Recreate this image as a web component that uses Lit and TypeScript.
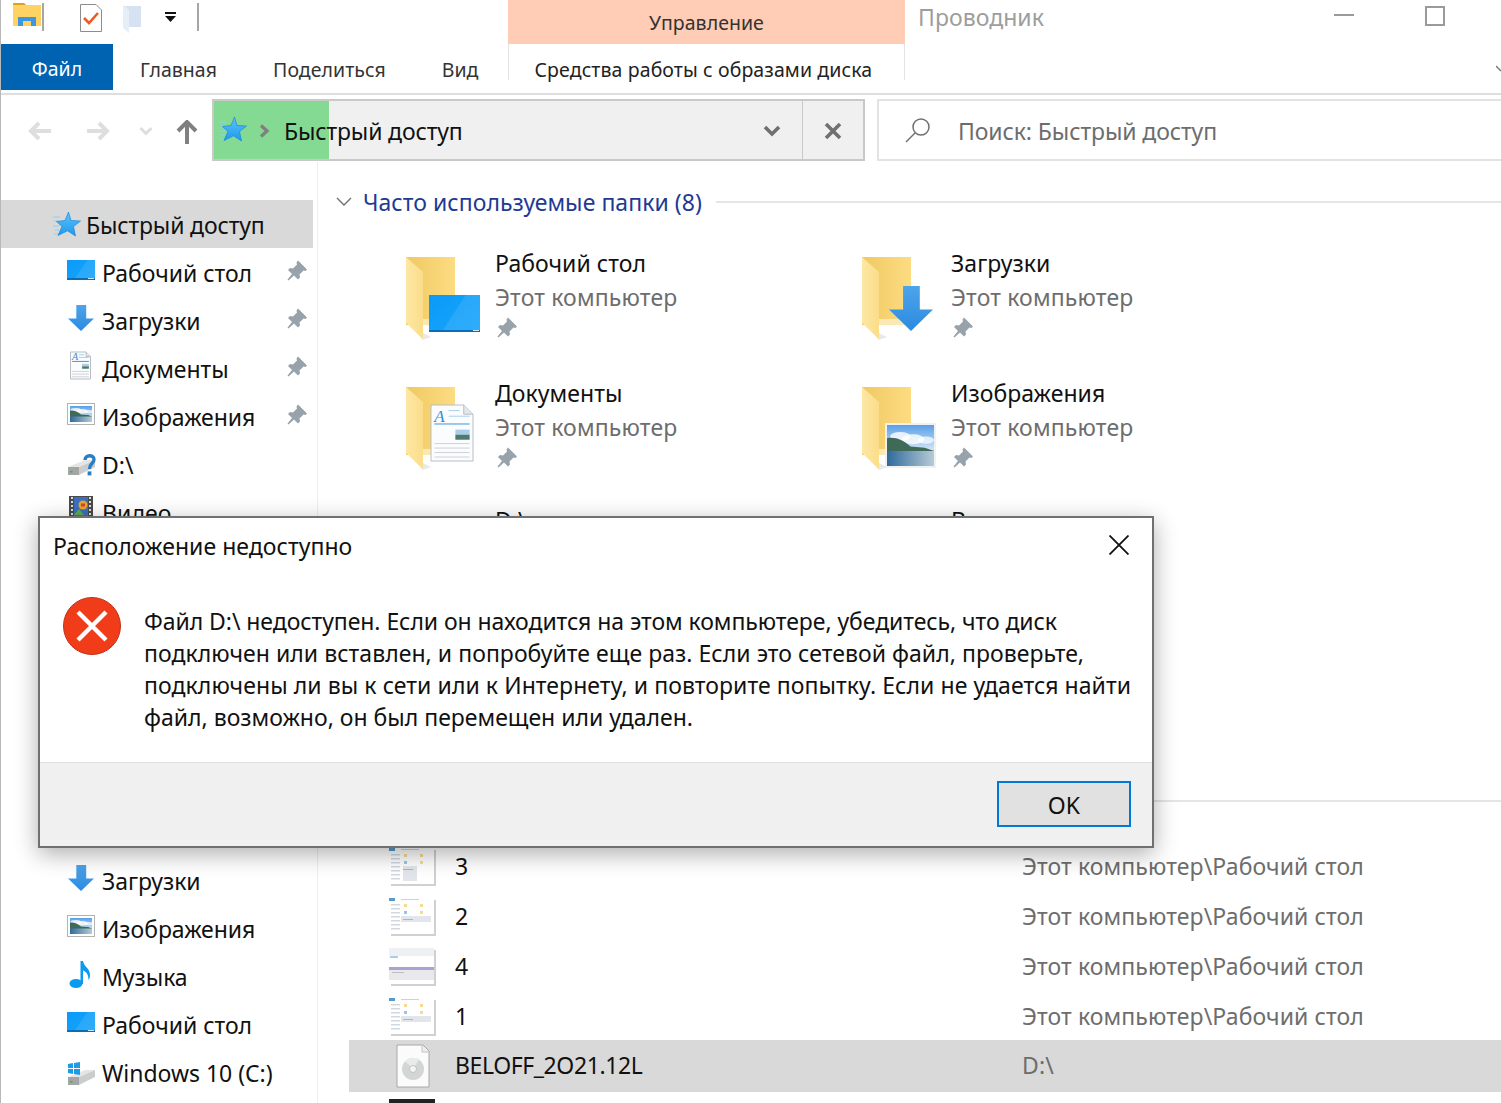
/**
 * Explorer window with the "location not available" dialog on top
 */

import { LitElement, html, svg, css } from 'lit'
import { customElement } from 'lit/decorators.js'

const PIN = 'M11 0 L20 9 L18.5 10.5 L16.5 10 L12.5 14 L13 17 L11 19 L7 15 L1.5 20 L0.5 19 L5 13.5 L1 9.5 L3 7.5 L6 8 L10 4 L9.5 2 Z'

const pin = () => html`<svg class="pin" width="20" height="21" viewBox="0 0 20 20"><path d=${PIN} fill="#98a2aa" /></svg>`

const star = () => html`<svg width="28" height="28" viewBox="0 0 28 28">
  <path d="M0 6h7M1 10h4M0 15h6M2 19h4M1 23h4" stroke="#8fd0f7" stroke-width="1.1" />
  <path d="M15.5 1 L18 9.5 L27.5 10 L20.5 15.5 L22.5 25 L14.5 19.8 L5 24.5 L9 15.5 L3.5 10.5 L12 9.5 Z" fill="url(#star)" stroke="#1a86d8" stroke-width=".7" />
</svg>`

const desktopBits = (x: number, y: number, w: number, h: number) => svg`
  <rect x=${x} y=${y} width=${w} height=${h} fill="url(#screen)" />
  <path d="M${x + w * 0.25} ${y + h} L${x + w * 0.72} ${y} H${x + w} V${y + h} Z" fill="#fff" opacity=".1" />
  <rect x=${x} y=${y + h - 2} width=${w} height="2" fill="#0a6db5" />
  <rect x=${x + w - 7} y=${y + h - 2} width="6" height="1" fill="#cfe9fb" />`

const arrowBits = (x: number, y: number, w: number, h: number) => {
  const sx = x + w * 0.32
  const sw = w * 0.38
  const mid = y + h * 0.52
  return svg`<path d="M${sx} ${y} H${sx + sw} V${mid} H${x + w} L${x + w / 2} ${y + h} L${x} ${mid} H${sx} Z" fill="url(#arrow)" />`
}

const pictureBits = (x: number, y: number, w: number, h: number, frame: string) => svg`
  <rect x=${x} y=${y} width=${w} height=${h} fill=${frame} />
  <rect x=${x + 2} y=${y + 2} width=${w - 4} height=${h * 0.58} fill="url(#sky)" />
  <ellipse cx=${x + w * 0.3} cy=${y + h * 0.3} rx=${w * 0.2} ry=${h * 0.1} fill="#fff" opacity=".8" />
  <ellipse cx=${x + w * 0.55} cy=${y + h * 0.36} rx=${w * 0.22} ry=${h * 0.11} fill="#fff" opacity=".8" />
  <ellipse cx=${x + w * 0.8} cy=${y + h * 0.38} rx=${w * 0.16} ry=${h * 0.08} fill="#fff" opacity=".7" />
  <rect x=${x + 2} y=${y + h * 0.6} width=${w - 4} height=${h * 0.4 - 2} fill="url(#water)" />
  <path d="M${x + 2} ${y + h * 0.34} C${x + w * 0.2} ${y + h * 0.3} ${x + w * 0.35} ${y + h * 0.38} ${x + w * 0.5} ${y + h * 0.52} L${x + w * 0.78} ${y + h * 0.55} L${x + w - 2} ${y + h * 0.62} H${x + 2} Z" fill="#3f6a58" />`

const docBits = (x: number, y: number, w: number, h: number, big: boolean) => {
  const fold = w * 0.22
  const lines = big ? [0.68, 0.76, 0.84, 0.92] : [0.7, 0.8, 0.9]
  return svg`
  <path d="M${x} ${y} H${x + w - fold} L${x + w} ${y + fold} V${y + h} H${x} Z" fill="#fbfcfd" stroke="#b8bec4" />
  <path d="M${x + w - fold} ${y} V${y + fold} H${x + w}" fill="#e4e7ea" stroke="#b8bec4" />
  <text x=${x + w * 0.08} y=${y + h * 0.3} class="doc-a" font-size=${big ? 17 : 10}>A</text>
  <path d="M${x + w * 0.42} ${y + h * 0.1} H${x + w * 0.68} M${x + w * 0.42} ${y + h * 0.2} H${x + w * 0.92}" stroke="#a9d0ec" />
  <rect x=${x + w * 0.08} y=${y + h * 0.33} width=${w * 0.84} height="1" fill="#3b9ae0" />
  <rect x=${x + w * 0.58} y=${y + h * 0.44} width=${w * 0.34} height=${h * 0.09} fill="#a9cdea" />
  <rect x=${x + w * 0.58} y=${y + h * 0.53} width=${w * 0.34} height=${h * 0.09} fill="#4d7a6c" />
  ${lines.map((l) => svg`<rect x=${x + w * 0.08} y=${y + h * l} width=${w * 0.84} height="1" fill="#cfd3d7" />`)}`
}

// Big yellow folder with a small badge in front of it
const folder = (badge: unknown) => html`<svg class="folder" width="80" height="84" viewBox="0 0 80 84">
  <rect x="1" y="0" width="49" height="68" fill="url(#folderBack)" />
  <rect x="18" y="62" width="32" height="6" fill="#fbe9b4" />
  <path d="M6 70 L18 83 L26 80 Z" fill="#e9e9e9" />
  <path d="M1 0 L18 15 V82 L1 66 Z" fill="url(#folderFront)" />
  ${badge}
</svg>`

const driveBody = () => svg`
  <path d="M2 18 L19 11 H29 L13 18 Z" fill="#e4e5e5" />
  <path d="M2 18 H13 V26 H2 Z" fill="#a4a6a6" />
  <path d="M13 18 L29 11 V18 L13 26 Z" fill="#cbcdcd" />
  <rect x="4" y="22" width="2.5" height="1.5" fill="#3bb54a" />`

const sideIcons: Record<string, () => unknown> = {
  desktop: () => html`<svg class="ic" width="30" height="30" viewBox="0 0 30 30">${desktopBits(1, 5, 28, 20)}</svg>`,
  download: () => html`<svg class="ic" width="30" height="30" viewBox="0 0 30 30">${arrowBits(2, 2, 26, 26)}</svg>`,
  doc: () => html`<svg class="ic" width="30" height="30" viewBox="0 0 30 30">${docBits(4.5, 1, 20, 27, false)}</svg>`,
  picture: () => html`<svg class="ic" width="30" height="30" viewBox="0 0 30 30">
    <rect x="1" y="4" width="28" height="22" fill="#b3b3b3" />${pictureBits(2, 5, 26, 20, '#fff')}</svg>`,
  missing: () => html`<svg class="ic" width="30" height="30" viewBox="0 -2 30 30">${driveBody()}
    <path d="M19 11 C19 5.5 28 5.5 28 10.5 C28 14.5 23.5 14 23.5 20" fill="none" stroke="#2a7fc4" stroke-width="3.4" />
    <rect x="21.6" y="22.4" width="3.8" height="4" fill="#2a7fc4" /></svg>`,
  film: () => html`<svg class="ic" width="30" height="30" viewBox="0 0 30 30">
    <rect x="3" y="1" width="24" height="28" fill="#4a4a4a" />
    <path d="M5 3h2M5 7h2M5 11h2M5 15h2M5 19h2M5 23h2M23 3h2M23 7h2M23 11h2M23 15h2M23 19h2M23 23h2" stroke="#ddd" stroke-width="2" />
    <rect x="8" y="2" width="14" height="26" fill="#3c6fc0" />
    <path d="M8 20 L13 14 L18 20 Z" fill="#5bb04c" />
    <circle cx="17" cy="10" r="4.5" fill="#e8a82c" />
    <path d="M15 10h4" stroke="#d9423a" stroke-width="3" /></svg>`,
  music: () => html`<svg class="ic" width="30" height="30" viewBox="0 0 30 30">
    <ellipse cx="10" cy="24.5" rx="6.5" ry="4.5" fill="#0a9bf0" />
    <path d="M14.5 2 H17 C18 8 24 9 24 16 C24 18.5 23.4 20 22.4 21 C22.7 15 20 13 17 11.5 V25 H14.5 Z" fill="#0a9bf0" /></svg>`,
  windows: () => html`<svg class="ic" width="30" height="30" viewBox="0 -4 30 30">${driveBody()}
    <path d="M2 5 L7 4 V9 H2 Z M8 4 L14 3 V9 H8 Z M2 10 H7 V15 L2 14 Z M8 10 H14 V16 L8 15 Z" fill="#1e9be8" /></svg>`,
}

// Tiny screenshot preview used by the recent files
const thumb = (kind: number) => html`<svg class="thumb" width="47" height="38" viewBox="0 0 47 38">
  <rect x="2" y="2" width="45" height="36" fill="#d0d0d0" />
  <rect x="0" y="0" width="45" height="36" fill="#fff" />
  <g opacity=".65">
  ${kind === 3
    ? svg`<rect x="0" y="0" width="45" height="8" fill="#e6eaee" />
        <rect x="1" y="8" width="8" height="2" fill="#7fb3e0" />
        <rect x="0" y="19" width="45" height="3" fill="#7a74b8" />
        <rect x="0" y="22" width="45" height="10" fill="#dcdce4" />
        <rect x="3" y="24" width="12" height="1" fill="#9a9a9a" />`
    : svg`<rect x="0" y="0" width="6" height="3" fill="#0063b1" />
        <rect x="12" y="1" width="18" height="1" fill="#f2a58c" />
        ${[6, 10, 14, 18, 22, 26, 30].map((y) => svg`<rect x="2" y=${y} width="9" height="1.5" fill="#b9c4d0" />`)}
        <rect x="15" y="6" width="3" height="3" fill="#f0c95c" />
        <rect x="31" y="6" width="3" height="3" fill="#f0c95c" />
        <rect x="15" y="13" width="3" height="3" fill="#5aa9e6" />
        <rect x="31" y="13" width="3" height="3" fill="#f0c95c" />
        <rect x=${kind === 0 ? 14 : 12} y="18" width=${kind === 0 ? 14 : 30} height=${kind === 0 ? 15 : 6} fill="#d4d9e0" />
        <rect x="14" y="21" width="10" height="1" fill="#8d8d8d" />`}
  </g>
</svg>`

const discFile = () => html`<svg class="thumb" width="47" height="44" viewBox="0 0 47 44">
  <path d="M8 1 H34 L40 7 V43 H8 Z" fill="#fbfbfb" stroke="#a8a8a8" />
  <path d="M33 1 V8 H40" fill="#ededed" stroke="#c4c4c4" />
  <circle cx="24" cy="25" r="11" fill="#d3d6d6" />
  <path d="M24 25 L16 17 A11 11 0 0 1 30 15.5 Z" fill="#e9ebeb" />
  <circle cx="24" cy="25" r="3.5" fill="#f4f4f4" stroke="#b5b8b8" stroke-width=".8" />
</svg>`

interface Tile {
  name: string
  badge: unknown
}

const TILES: Tile[] = [
  { name: 'Рабочий стол', badge: desktopBits(24, 38, 51, 37) },
  { name: 'Загрузки', badge: arrowBits(28, 29, 44, 45) },
  { name: 'Документы', badge: docBits(26, 18, 42, 56, true) },
  { name: 'Изображения', badge: pictureBits(24, 36, 51, 45, '#f1f1f1') },
  { name: 'D:\\', badge: null },
  { name: 'Видео', badge: null },
]

const SIDE_TOP = [
  { icon: 'desktop', label: 'Рабочий стол', pinned: true },
  { icon: 'download', label: 'Загрузки', pinned: true },
  { icon: 'doc', label: 'Документы', pinned: true },
  { icon: 'picture', label: 'Изображения', pinned: true },
  { icon: 'missing', label: 'D:\\', pinned: false },
  { icon: 'film', label: 'Видео', pinned: false },
]

const SIDE_BOTTOM = [
  { icon: 'doc', label: 'Документы', pinned: false },
  { icon: 'download', label: 'Загрузки', pinned: false },
  { icon: 'picture', label: 'Изображения', pinned: false },
  { icon: 'music', label: 'Музыка', pinned: false },
  { icon: 'desktop', label: 'Рабочий стол', pinned: false },
  { icon: 'windows', label: 'Windows 10 (C:)', pinned: false },
]

const RECENT = [
  { name: '3', kind: 0 },
  { name: '2', kind: 1 },
  { name: '4', kind: 3 },
  { name: '1', kind: 2 },
]

const PLACE = 'Этот компьютер\\Рабочий стол'

// tracking keeps each line as wide as in the original font
const MESSAGE = [
  { text: 'Файл D:\\ недоступен. Если он находится на этом компьютере, убедитесь, что диск', tracking: -0.06 },
  { text: 'подключен или вставлен, и попробуйте еще раз. Если это сетевой файл, проверьте,', tracking: 0.045 },
  { text: 'подключены ли вы к сети или к Интернету, и повторите попытку. Если не удается найти', tracking: 0.07 },
  { text: 'файл, возможно, он был перемещен или удален.', tracking: 0 },
]

@customElement('app-root')
export class AppRoot extends LitElement {
  static styles = css`
    :host {
      display: block;
      position: relative;
      width: 1501px;
      height: 1103px;
      overflow: hidden;
      background: #fff;
      color: #111;
      font-family: 'Noto Sans', 'Open Sans', sans-serif;
      font-size: 23px;
      letter-spacing: 0.05px;
      box-sizing: border-box;
      border-left: 1px solid #b8b8b8;
    }

    svg {
      display: block;
      flex: none;
    }

    .defs {
      position: absolute;
      width: 0;
      height: 0;
    }

    /* title bar */
    .titlebar {
      display: flex;
      height: 44px;
    }

    .qat {
      flex: 0 0 507px;
      display: flex;
      align-items: flex-start;
    }

    .qat-folder {
      margin: 3px 0 0 12px;
    }

    .qat-sep {
      width: 2px;
      height: 28px;
      margin-top: 3px;
      background: #a6a6a6;
    }

    .qat-check {
      margin: 4px 0 0 26px;
    }

    .qat-new {
      margin: 5px 0 0 21px;
    }

    .qat-more {
      margin: 12px 20px 0 22px;
    }

    .qat-first {
      margin-right: 10px;
    }

    .context-head {
      flex: 0 0 397px;
      background: #ffcdb6;
      text-align: center;
      font-size: 19.5px;
      line-height: 46px;
      color: #333;
    }

    .app-title {
      margin-left: 13px;
      line-height: 34px;
      color: #9d9d9d;
    }

    .win-buttons {
      margin-left: auto;
      display: flex;
      align-items: flex-start;
    }

    .win-min {
      width: 20px;
      height: 2px;
      margin: 14px 0 0;
      background: #9a9a9a;
    }

    .win-max {
      width: 16px;
      height: 16px;
      margin: 6px 56px 0 71px;
      border: 2px solid #9a9a9a;
    }

    /* ribbon tabs */
    .tabs {
      display: flex;
      height: 46px;
      font-size: 19.5px;
      line-height: 51px;
      padding-bottom: 3px;
      border-bottom: 2px solid #dedede;
      color: #333;
    }

    .tab-file {
      flex: 0 0 112px;
      background: #0063b1;
      color: #fff;
      text-align: center;
      line-height: 50px;
    }

    .tab {
      margin-left: 27px;
    }

    .tab + .tab {
      margin-left: 56px;
    }

    .tab-context {
      flex: 0 0 397px;
      height: 36px;
      margin-left: 29px;
      padding-left: 26px;
      box-sizing: border-box;
      border: solid #e3e3e3;
      border-width: 0 1px;
      color: #222;
      letter-spacing: 0.1px;
      white-space: nowrap;
    }

    .ribbon-fold {
      margin: 20px 0 0 auto;
    }

    /* address row */
    .nav {
      display: flex;
      align-items: center;
      height: 67px;
      padding: 4px 0 1px;
      box-sizing: border-box;
    }

    .nav-back {
      margin: 2px 0 0 27px;
    }

    .nav-forward {
      margin: 2px 0 0 34px;
    }

    .nav-recent {
      margin: 2px 0 0 29px;
    }

    .nav-up {
      margin: 4px 14px 0 23px;
    }

    .address {
      flex: 0 0 653px;
      height: 62px;
      box-sizing: border-box;
      display: flex;
      align-items: center;
      letter-spacing: -0.15px;
      border: 2px solid #c9c9c9;
      background: linear-gradient(90deg, #84d993 115px, #f0f0f0 115px);
    }

    .address > svg:first-child {
      margin-left: 5px;
    }

    .address-sep {
      margin: 2px 13px 0 12px;
    }

    .address-text {
      flex: 1;
      padding-top: 2px;
    }

    .address-down {
      margin: 2px 21px 0 0;
    }

    .address-close {
      flex: 0 0 61px;
      align-self: stretch;
      display: flex;
      align-items: center;
      justify-content: center;
      padding-top: 2px;
      box-sizing: border-box;
      border-left: 1px solid #c9c9c9;
    }

    .search {
      flex: 1;
      height: 62px;
      box-sizing: border-box;
      margin-left: 12px;
      padding-top: 2px;
      display: flex;
      align-items: center;
      letter-spacing: -0.1px;
      border: solid #e3e3e3;
      border-width: 2px 0 2px 2px;
      color: #6d6d6d;
    }

    .search svg {
      margin: -2px 27px 0 26px;
    }

    /* left tree */
    .body {
      display: flex;
      height: 941px;
      overflow: hidden;
    }

    .tree {
      flex: 0 0 316px;
      box-sizing: content-box;
      padding-top: 38px;
      border-right: 1px solid #eee;
    }

    .tree-row {
      width: 312px;
      height: 48px;
      box-sizing: border-box;
      display: flex;
      align-items: center;
      padding: 0 6px 0 65px;
      white-space: nowrap;
      letter-spacing: -0.03px;
    }

    .tree-row span {
      padding-top: 2px;
    }

    .tree-row .ic {
      margin: -4px 6px 0 0;
    }

    .tree-head {
      background: #d9d9d9;
      padding-left: 52px;
      letter-spacing: -0.15px;
    }

    .tree-head svg {
      margin: 2px 5px 0 0;
    }

    .tree-row .pin {
      margin: -4px 0 0 auto;
    }

    .tree-gap {
      height: 272px;
    }

    /* content */
    .content {
      flex: 1;
      min-width: 0;
    }

    .group {
      display: flex;
      align-items: center;
      height: 48px;
      margin-top: 16px;
      padding-left: 18px;
      letter-spacing: 0.05px;
      color: #1f3a93;
    }

    .group svg {
      margin-right: 11px;
    }

    .group-line {
      flex: 1;
      height: 2px;
      margin-left: 14px;
      background: #e5e5e5;
    }

    .tiles {
      display: grid;
      grid-template-columns: 456px 456px;
      grid-auto-rows: 130px;
      margin: 21px 0 140px 87px;
    }

    .tile {
      display: flex;
      padding-top: 10px;
      box-sizing: border-box;
    }

    .tile:nth-child(n + 5) {
      margin-top: -3px;
    }

    .tile:nth-child(n + 5) .folder {
      margin-top: 3px;
    }

    .folder {
      margin-right: 10px;
    }

    .tile-text {
      margin-top: -11px;
      line-height: 34px;
    }

    .tile-sub {
      color: #6d6d6d;
      letter-spacing: 0.15px;
    }

    .tile-text .pin {
      margin: 3px 0 0 2px;
    }

    .group-recent {
      margin-top: 0;
    }

    .recent {
      margin: 17px 0 0 31px;
    }

    .recent-row {
      display: grid;
      grid-template-columns: 106px 567px 1fr;
      align-items: center;
      height: 50px;
    }

    .recent-row span {
      margin-top: -2px;
    }

    .recent-row .thumb {
      margin-left: 40px;
    }

    .recent-place {
      color: #6d6d6d;
      letter-spacing: 0.1px;
    }

    .recent-row.selected {
      height: 52px;
      margin-top: -2px;
      background: #d9d9d9;
    }

    .recent-row.selected span:first-of-type {
      letter-spacing: -0.4px;
    }

    .thumb-dark {
      width: 46px;
      height: 36px;
      margin-left: 40px;
      background: #222;
    }

    /* dialog */
    .dialog {
      position: absolute;
      left: 37px;
      top: 516px;
      width: 1116px;
      height: 332px;
      box-sizing: border-box;
      display: flex;
      flex-direction: column;
      background: #fff;
      border: 2px solid #707070;
      box-shadow: 0 6px 22px rgba(0, 0, 0, 0.32);
    }

    .dialog-title {
      flex: 0 0 58px;
      box-sizing: border-box;
      display: flex;
      align-items: center;
      justify-content: space-between;
      padding: 0 23px 2px 13px;
    }

    .dialog-title svg {
      margin-top: -2px;
    }

    .dialog-body {
      flex: 1;
      display: flex;
      padding: 21px 0 0 23px;
    }

    .message {
      margin: 8px 0 0 23px;
      line-height: 32px;
      white-space: nowrap;
    }

    .dialog-foot {
      flex: 0 0 84px;
      box-sizing: border-box;
      display: flex;
      justify-content: flex-end;
      padding: 18px 21px 0 0;
      background: #f0f0f0;
      border-top: 1px solid #dfdfdf;
    }

    .ok {
      width: 134px;
      height: 46px;
      box-sizing: border-box;
      border: 2px solid #0078d7;
      background: #e1e1e1;
      font: inherit;
      letter-spacing: inherit;
      color: #111;
      padding: 2px 0 0;
    }

    .doc-a {
      font-family: 'Liberation Serif', serif;
      font-style: italic;
      fill: #2f8fd8;
    }
  `

  private renderTreeRow(row: { icon: string; label: string; pinned: boolean }) {
    return html`<div class="tree-row">
      ${sideIcons[row.icon]()}<span>${row.label}</span>${row.pinned ? pin() : null}
    </div>`
  }

  private renderTitlebar() {
    return html`<div class="titlebar">
      <div class="qat">
        <svg class="qat-folder" width="29" height="24" viewBox="0 0 29 24">
          <path d="M0 0 H11 L13 2 H28 V23 H0 Z" fill="#ffd264" />
          <path d="M0 0 H11 L13 2 H0 Z" fill="#e0a21e" />
          <path d="M5 23 V14 H23 V23 H18 V18 H10 V23 Z" fill="#3f97e0" />
        </svg>
        <span class="qat-sep qat-first"></span>
        <svg class="qat-check" width="22" height="28" viewBox="0 0 22 28">
          <path d="M.5 .5 H16 L21.5 6 V27.5 H.5 Z" fill="#fff" stroke="#8d8d8d" />
          <path d="M4 14 L9 19 L18 9" fill="none" stroke="#f0591f" stroke-width="2.6" />
        </svg>
        <svg class="qat-new" width="20" height="28" viewBox="0 0 20 28">
          <rect x="0" y="1" width="18" height="21" fill="#d6e2f1" />
          <path d="M0 0 L6 5 V28 L0 23 Z" fill="#e6eef8" />
        </svg>
        <svg class="qat-more" width="12" height="11" viewBox="0 0 12 11">
          <rect x="0" y="0" width="11" height="2" fill="#111" />
          <path d="M0 4 H11 L5.5 10 Z" fill="#111" />
        </svg>
        <span class="qat-sep"></span>
      </div>
      <div class="context-head">Управление</div>
      <div class="app-title">Проводник</div>
      <div class="win-buttons">
        <span class="win-min"></span>
        <span class="win-max"></span>
      </div>
    </div>`
  }

  private renderTabs() {
    return html`<div class="tabs">
      <div class="tab-file">Файл</div>
      <div class="tab">Главная</div>
      <div class="tab">Поделиться</div>
      <div class="tab">Вид</div>
      <div class="tab-context">Средства работы с образами диска</div>
      <svg class="ribbon-fold" width="5" height="10" viewBox="0 0 5 10">
        <path d="M0 2 L5 7" stroke="#777" stroke-width="1.4" fill="none" />
      </svg>
    </div>`
  }

  private renderNav() {
    return html`<div class="nav">
      <svg class="nav-back" width="24" height="20" viewBox="0 0 24 20">
        <path d="M11 2 L3 10 L11 18 M3 10 H23" fill="none" stroke="#dedede" stroke-width="4" />
      </svg>
      <svg class="nav-forward" width="24" height="20" viewBox="0 0 24 20">
        <path d="M13 2 L21 10 L13 18 M21 10 H1" fill="none" stroke="#dedede" stroke-width="4" />
      </svg>
      <svg class="nav-recent" width="14" height="10" viewBox="0 0 14 10">
        <path d="M1.5 2 L7 7.5 L12.5 2" fill="none" stroke="#dedede" stroke-width="3" />
      </svg>
      <svg class="nav-up" width="22" height="24" viewBox="0 0 22 24">
        <path d="M2 11 L11 2 L20 11 M11 3 V24" fill="none" stroke="#808080" stroke-width="4" />
      </svg>
      <div class="address">
        ${star()}
        <svg class="address-sep" width="12" height="14" viewBox="0 0 12 14">
          <path d="M2 1.5 L8 7 L2 12.5" fill="none" stroke="#808080" stroke-width="3.4" />
        </svg>
        <span class="address-text">Быстрый доступ</span>
        <svg class="address-down" width="18" height="12" viewBox="0 0 18 12">
          <path d="M2 2 L9 9 L16 2" fill="none" stroke="#707070" stroke-width="3.6" />
        </svg>
        <div class="address-close">
          <svg width="18" height="18" viewBox="0 0 18 18">
            <path d="M2 2 L16 16 M16 2 L2 16" stroke="#707070" stroke-width="3.6" />
          </svg>
        </div>
      </div>
      <div class="search">
        <svg width="26" height="26" viewBox="0 0 26 26">
          <circle cx="16" cy="10" r="8" fill="none" stroke="#707070" stroke-width="1.5" />
          <path d="M10 16 L1 25" stroke="#707070" stroke-width="1.5" />
        </svg>
        <span>Поиск: Быстрый доступ</span>
      </div>
    </div>`
  }

  private renderTree() {
    return html`<div class="tree">
      <div class="tree-row tree-head">${star()}<span>Быстрый доступ</span></div>
      ${SIDE_TOP.map((row) => this.renderTreeRow(row))}
      <div class="tree-gap"></div>
      ${SIDE_BOTTOM.map((row) => this.renderTreeRow(row))}
    </div>`
  }

  private renderContent() {
    const chevron = html`<svg width="16" height="10" viewBox="0 0 16 10">
      <path d="M1 1 L8 8 L15 1" fill="none" stroke="#707070" stroke-width="1.4" />
    </svg>`
    return html`<div class="content">
      <div class="group">${chevron}<span>Часто используемые папки (8)</span><span class="group-line"></span></div>
      <div class="tiles">
        ${TILES.map(
          (tile) => html`<div class="tile">
            ${folder(tile.badge)}
            <div class="tile-text">
              <div>${tile.name}</div>
              <div class="tile-sub">Этот компьютер</div>
              ${pin()}
            </div>
          </div>`,
        )}
      </div>
      <div class="group group-recent">${chevron}<span>Последние файлы (20)</span><span class="group-line"></span></div>
      <div class="recent">
        ${RECENT.map(
          (file) => html`<div class="recent-row">
            ${thumb(file.kind)}<span>${file.name}</span><span class="recent-place">${PLACE}</span>
          </div>`,
        )}
        <div class="recent-row selected">
          ${discFile()}<span>BELOFF_2O21.12L</span><span class="recent-place">D:\\</span>
        </div>
        <div class="recent-row"><div class="thumb-dark"></div></div>
      </div>
    </div>`
  }

  private renderDialog() {
    return html`<div class="dialog">
      <div class="dialog-title">
        <span>Расположение недоступно</span>
        <svg width="20" height="20" viewBox="0 0 20 20">
          <path d="M0.5 0.5 L19.5 19.5 M19.5 0.5 L0.5 19.5" stroke="#111" stroke-width="1.8" />
        </svg>
      </div>
      <div class="dialog-body">
        <svg width="58" height="58" viewBox="0 0 58 58">
          <circle cx="29" cy="29" r="28.5" fill="#f13c1a" stroke="#c23318" />
          <path d="M15 15 L43 43 M43 15 L15 43" stroke="#fff" stroke-width="4.4" />
        </svg>
        <div class="message">
          ${MESSAGE.map((line) => html`<div style="letter-spacing: ${line.tracking}px">${line.text}</div>`)}
        </div>
      </div>
      <div class="dialog-foot"><button class="ok">OK</button></div>
    </div>`
  }

  render() {
    return html`
      <svg class="defs">
        <defs>
          <linearGradient id="star" x1="0" y1="0" x2="0" y2="1">
            <stop offset="0" stop-color="#5cc4fb" /><stop offset="1" stop-color="#1e98ee" />
          </linearGradient>
          <linearGradient id="screen" x1="0" y1="0" x2="1" y2="1">
            <stop offset="0" stop-color="#0a9bf8" /><stop offset="1" stop-color="#18a4fb" />
          </linearGradient>
          <linearGradient id="arrow" x1="0" y1="0" x2="0" y2="1">
            <stop offset="0" stop-color="#4ea4ea" /><stop offset="1" stop-color="#2b8ae0" />
          </linearGradient>
          <linearGradient id="sky" x1="0" y1="0" x2="0" y2="1">
            <stop offset="0" stop-color="#5b9fe8" /><stop offset="1" stop-color="#d6e8f7" />
          </linearGradient>
          <linearGradient id="water" x1="0" y1="0" x2="1" y2="0">
            <stop offset="0" stop-color="#2f6a9c" /><stop offset="1" stop-color="#b7cbd6" />
          </linearGradient>
          <linearGradient id="folderBack" x1="0" y1="0" x2="1" y2="0">
            <stop offset="0" stop-color="#efc862" /><stop offset="1" stop-color="#fddc82" />
          </linearGradient>
          <linearGradient id="folderFront" x1="0" y1="0" x2="1" y2="0">
            <stop offset="0" stop-color="#fee7a4" /><stop offset="1" stop-color="#fbdd8a" />
          </linearGradient>
        </defs>
      </svg>
      ${this.renderTitlebar()} ${this.renderTabs()} ${this.renderNav()}
      <div class="body">${this.renderTree()} ${this.renderContent()}</div>
      ${this.renderDialog()}
    `
  }
}

declare global {
  interface HTMLElementTagNameMap {
    'app-root': AppRoot
  }
}
